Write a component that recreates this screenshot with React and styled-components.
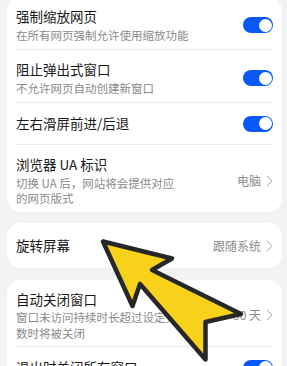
import React from "react";
import styled, { createGlobalStyle } from "styled-components";

const GlobalStyle = createGlobalStyle`
  html, body {
    margin: 0;
    padding: 0;
    background: #f1f3f5;
  }
  * {
    box-sizing: border-box;
  }
`;

const Page = styled.div`
  position: relative;
  width: 287px;
  height: 366px;
  overflow: hidden;
  background: #f1f3f5;
  padding: 0 5px 0 7px;
  display: flex;
  flex-direction: column;
  gap: 11.5px;
  font-family: "Noto Sans CJK SC", "Noto Sans", sans-serif;
`;

const Card = styled.div`
  background: #fff;
  border-radius: 14px;
  padding: 0 9px;
  margin-top: ${(p) => (p.$first ? "-3px" : "0")};
  flex-shrink: 0;
`;

const Row = styled.div`
  display: flex;
  align-items: center;
  padding: ${(p) => p.$pad};
  border-bottom: ${(p) => (p.$last ? "none" : "1px solid #ebebeb")};
`;

const TextCol = styled.div`
  flex: 1;
  min-width: 0;
  max-width: ${(p) => (p.$narrow ? "166px" : "none")};
`;

const Title = styled.div`
  font-size: 13.5px;
  line-height: 19px;
  color: #191919;
`;

const Sub = styled.div`
  margin-top: 1.5px;
  font-size: 11.5px;
  line-height: 15.5px;
  color: #8a8a8a;
`;

const Value = styled.div`
  margin-left: auto;
  display: flex;
  align-items: center;
  gap: 5px;
  font-size: 12px;
  line-height: 16px;
  color: #8c8c8c;
  white-space: nowrap;
`;

const Switch = styled.div`
  margin-left: auto;
  width: 30px;
  height: 16px;
  border-radius: 8px;
  background: #0a59f7;
  display: flex;
  align-items: center;
  justify-content: flex-end;
  padding: 0 1.5px;
  flex-shrink: 0;
`;

const Knob = styled.div`
  width: 13px;
  height: 13px;
  border-radius: 50%;
  background: #fff;
`;

const Overlay = styled.svg`
  position: absolute;
  left: 0;
  top: 0;
  pointer-events: none;
`;

const Chevron = () => (
  <svg width="7" height="12" viewBox="0 0 7 12">
    <path d="M1 1 L6 6 L1 11" fill="none" stroke="#c6c6c6" strokeWidth="1.1" strokeLinecap="round" strokeLinejoin="round" />
  </svg>
);

const Toggle = () => (
  <Switch>
    <Knob />
  </Switch>
);

const PAD_TWO = "10px 0 6px";
const PAD_ONE = "11px 0";

export default function App() {
  return (
    <>
      <GlobalStyle />
      <Page>
        <Card $first>
          <Row $pad={PAD_TWO}>
            <TextCol>
              <Title>强制缩放网页</Title>
              <Sub>在所有网页强制允许使用缩放功能</Sub>
            </TextCol>
            <Toggle />
          </Row>
          <Row $pad={PAD_TWO}>
            <TextCol>
              <Title>阻止弹出式窗口</Title>
              <Sub>不允许网页自动创建新窗口</Sub>
            </TextCol>
            <Toggle />
          </Row>
          <Row $pad={PAD_ONE}>
            <TextCol>
              <Title>左右滑屏前进/后退</Title>
            </TextCol>
            <Toggle />
          </Row>
          <Row $pad="10px 0 5px" $last>
            <TextCol $narrow>
              <Title>浏览器 UA 标识</Title>
              <Sub>切换 UA 后，网站将会提供对应的网页版式</Sub>
            </TextCol>
            <Value>
              电脑
              <Chevron />
            </Value>
          </Row>
        </Card>

        <Card>
          <Row $pad="13px 0" $last>
            <TextCol>
              <Title>旋转屏幕</Title>
            </TextCol>
            <Value>
              跟随系统
              <Chevron />
            </Value>
          </Row>
        </Card>

        <Card>
          <Row $pad="10px 0 5px">
            <TextCol $narrow>
              <Title>自动关闭窗口</Title>
              <Sub>窗口未访问持续时长超过设定天数时将被关闭</Sub>
            </TextCol>
            <Value>
              30 天
              <Chevron />
            </Value>
          </Row>
          <Row $pad={PAD_ONE} $last>
            <TextCol>
              <Title>退出时关闭所有窗口</Title>
            </TextCol>
            <Toggle />
          </Row>
        </Card>

        <Overlay width="287" height="366" viewBox="0 0 287 366">
          <polygon
            points="103,241.5 172,258.5 152,270 241,314 205.5,322 205.5,359.5 140,284 132.5,306"
            fill="#f7d11a"
            stroke="#272727"
            strokeWidth="4.5"
            strokeLinejoin="round"
          />
        </Overlay>
      </Page>
    </>
  );
}
